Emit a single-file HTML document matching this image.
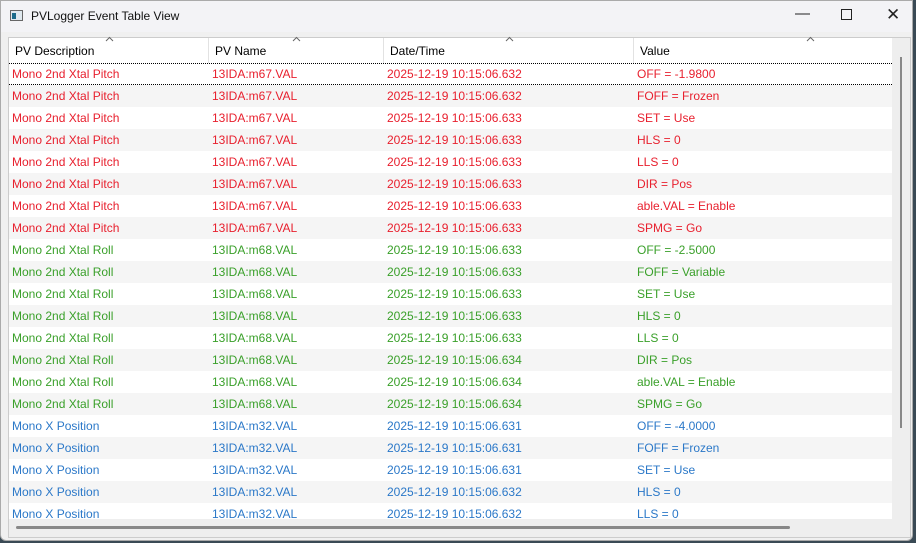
<!DOCTYPE html>
<html><head><style>
*{margin:0;padding:0;box-sizing:border-box}
body{width:916px;height:543px;overflow:hidden;background:#3a4a55;font-family:"Liberation Sans",sans-serif;font-size:12px;position:relative}
#win{position:absolute;left:0;top:0;width:913px;height:541px;background:#f0f0f0;border:1px solid #aaa;border-radius:0 0 6px 6px}
#title{position:absolute;left:0;top:0;width:911px;height:31px;background:#f3f3f6}
#title .t{position:absolute;left:30px;top:8px;font-size:12px;color:#111}
#icon{position:absolute;left:9px;top:9px;width:13px;height:11px;border:1px solid #666;background:#dfe8ee}
#icon:before{content:"";position:absolute;left:1px;top:2px;width:4px;height:6px;background:#1a6a8a}
.wb{position:absolute;top:7px;font-size:15px;color:#222}
#tbl{position:absolute;left:7px;top:36px;width:903px;height:501px;background:#fff;border:1px solid #ccc}
#hdr{position:absolute;left:0;top:0;width:883px;height:24px;background:#fff}
.h{position:absolute;top:6px;color:#000}
.car{position:absolute;top:-2px;width:9px;height:6px}
.vl{position:absolute;top:0;width:1px;height:480px;background:#e2e2e2}
.row{position:absolute;left:0;width:883px;height:22px}
.row span{position:absolute;top:4px;white-space:nowrap}
.r{color:#e8202e}.g{color:#3aa02a}.b{color:#2b78c8}
#vs{position:absolute;left:883px;top:0;width:18px;height:481px;background:#eee}
#vth{position:absolute;left:891px;top:19px;width:2px;height:371px;background:#888}
#hs{position:absolute;left:0;top:481px;width:901px;height:18px;background:#eee}
#hth{position:absolute;left:7px;top:488px;width:774px;height:3px;background:#888;border-radius:2px}
</style></head><body>
<div id="win">
<div id="title"><div id="icon"></div><div class="t">PVLogger Event Table View</div>
<div class="wb" style="left:794px;top:4px">&#8212;</div>
<div class="wb" style="left:840px;top:8px;width:11px;height:11px;border:1.3px solid #222"></div>
<div class="wb" style="left:885px;top:4px;font-size:17px">&#10005;</div>
</div>
<div id="tbl">
<div id="hdr">
<span class="h" style="left:6px">PV Description</span>
<span class="h" style="left:206px">PV Name</span>
<span class="h" style="left:381px">Date/Time</span>
<span class="h" style="left:631px">Value</span>
<svg class="car" style="left:96px" viewBox="0 0 9 6"><path d="M1 5L4.5 1.5L8 5" fill="none" stroke="#666" stroke-width="1"/></svg>
<svg class="car" style="left:283px" viewBox="0 0 9 6"><path d="M1 5L4.5 1.5L8 5" fill="none" stroke="#666" stroke-width="1"/></svg>
<svg class="car" style="left:496px" viewBox="0 0 9 6"><path d="M1 5L4.5 1.5L8 5" fill="none" stroke="#666" stroke-width="1"/></svg>
<svg class="car" style="left:797px" viewBox="0 0 9 6"><path d="M1 5L4.5 1.5L8 5" fill="none" stroke="#666" stroke-width="1"/></svg>
</div>
<div class="vl" style="left:199px"></div><div class="vl" style="left:374px"></div><div class="vl" style="left:624px"></div>
<div id="rows"></div>
<div id="vs"></div><div id="vth"></div>
<div id="hs"></div><div id="hth"></div>
</div>
</div>
<script>
var d=[["r","Mono 2nd Xtal Pitch","13IDA:m67.VAL",["632","632","633","633","633","633","633","633"],["OFF = -1.9800","FOFF = Frozen","SET = Use","HLS = 0","LLS = 0","DIR = Pos","able.VAL = Enable","SPMG = Go"]],
["g","Mono 2nd Xtal Roll","13IDA:m68.VAL",["633","633","633","633","633","634","634","634"],["OFF = -2.5000","FOFF = Variable","SET = Use","HLS = 0","LLS = 0","DIR = Pos","able.VAL = Enable","SPMG = Go"]],
["b","Mono X Position","13IDA:m32.VAL",["631","631","631","632","632"],["OFF = -4.0000","FOFF = Frozen","SET = Use","HLS = 0","LLS = 0"]]];
var h="",i=0;
d.forEach(function(g){for(var k=0;k<g[3].length;k++){var y=25+i*22;var bg=i%2?"#f5f5f5":"#fff";
var bd=i==0?"border-top:1px dotted #000;border-bottom:1px dotted #000;":"";
h+='<div class="row '+g[0]+'" style="top:'+y+'px;background:'+bg+';'+bd+'"><span style="left:3px;top:'+(i==0?3:4)+'px">'+g[1]+'</span><span style="left:203px;top:'+(i==0?3:4)+'px">'+g[2]+'</span><span style="left:378px;top:'+(i==0?3:4)+'px">2025-12-19 10:15:06.'+g[3][k]+'</span><span style="left:628px;top:'+(i==0?3:4)+'px">'+g[4][k]+'</span></div>';i++;}});
document.getElementById("rows").innerHTML=h;
</script>
</body></html>
